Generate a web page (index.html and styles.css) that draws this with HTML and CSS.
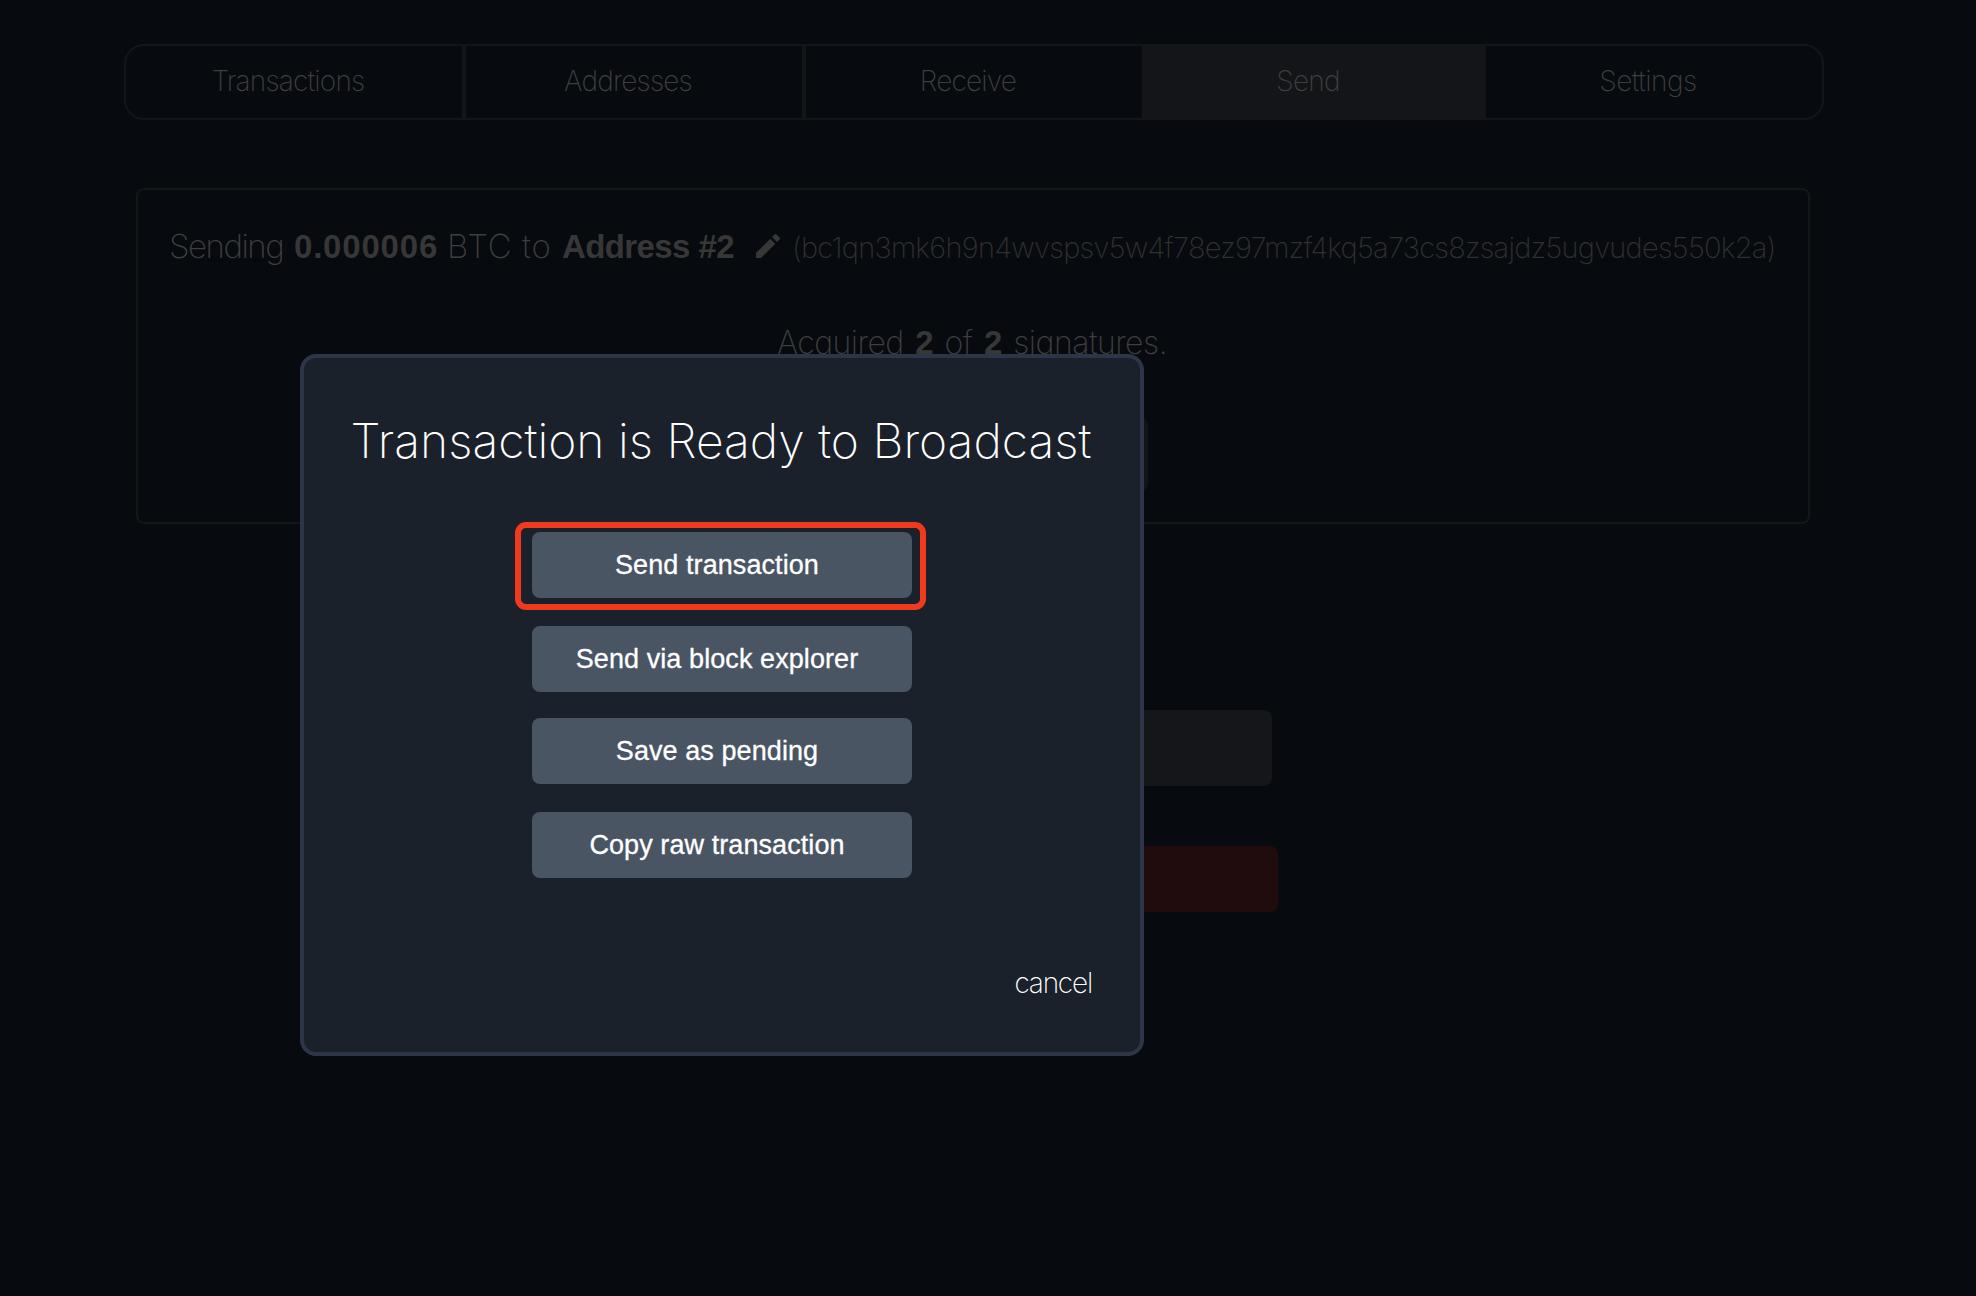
FILE: index.html
```html
<!DOCTYPE html>
<html lang="en">
<head>
<meta charset="utf-8">
<title>Send</title>
<link rel="stylesheet" href="styles.css">
</head>
<body>
<main class="page">
  <nav class="tabs">
    <a class="tab">Transactions</a>
    <a class="tab">Addresses</a>
    <a class="tab">Receive</a>
    <a class="tab active">Send</a>
    <a class="tab">Settings</a>
  </nav>
  <section class="card">
    <p class="summary"><span class="sending">Sending</span><b class="amount">0.000006</b><span class="unit">BTC</span><span class="to">to</span><b class="label">Address #2</b><svg class="pencil" viewBox="0 0 24 24"><path d="M0 19v5h5L19.300 9.700l-5-5zM23.600 5.400a1.300 1.300 0 0 0 0-1.900L20.500.4a1.300 1.300 0 0 0-1.900 0L16 3l5 5z"/></svg><span class="address">(bc1qn3mk6h9n4wvspsv5w4f78ez97mzf4kq5a73cs8zsajdz5ugvudes550k2a)</span></p>
    <p class="signatures">Acquired <b>2</b> of <b>2</b> signatures.</p>
    <div class="small-button"></div>
  </section>
  <div class="wide-button"></div>
  <div class="danger-button"></div>
</main>
<div class="modal">
  <h1>Transaction is Ready to Broadcast</h1>
  <div class="actions">
    <button class="highlighted">Send transaction</button>
    <button>Send via block explorer</button>
    <button>Save as pending</button>
    <button>Copy raw transaction</button>
  </div>
  <a class="cancel">cancel</a>
</div>
</body>
</html>
```
FILE: styles.css
```css
*, *::after { box-sizing: border-box; }
body {
  margin: 0;
  height: 1296px;
  overflow: hidden;
  position: relative;
  background: #070a0f;
  color: #3e3e3e;
  font-family: Inter, "Liberation Sans", sans-serif;
  font-weight: 200;
}
.page {
  width: 1700px;
  margin-left: 124px;
  padding-top: 44px;
  display: flex;
  flex-direction: column;
  align-items: center;
}
.tabs { display: flex; width: 1700px; height: 76px; }
.tab {
  flex: 1;
  padding-right: 12px;
  border: 2px solid #141518;
  font-size: 28px;
  line-height: 70px;
  letter-spacing: -0.8px;
  text-align: center;
}
.tab:first-child { border-radius: 20px 0 0 20px; }
.tab:last-child { border-radius: 0 20px 20px 0; letter-spacing: -0.5px; }
.tab.active { background: #141518; }
.card {
  width: 1674px;
  height: 336px;
  margin: 68px 2px 0 0;
  border: 2px solid #151618;
  border-radius: 8px;
  padding: 34px 31px 0;
  display: flex;
  flex-direction: column;
  align-items: center;
}
.summary {
  margin: 0;
  width: 100%;
  display: flex;
  align-items: baseline;
  font-size: 33px;
  line-height: 44px;
  white-space: nowrap;
}
b { font-weight: 700; font-family: "Liberation Sans", sans-serif; color: #373737; }
.sending { width: 125px; letter-spacing: -1.5px; }
.amount { width: 153px; letter-spacing: 0.8px; }
.unit { width: 75px; letter-spacing: 0.9px; }
.to { width: 40px; letter-spacing: 0.8px; }
.label { width: 194px; letter-spacing: -0.6px; }
.pencil { flex: none; width: 24px; height: 24px; fill: #373737; }
.address { margin-left: 12px; font-size: 29px; letter-spacing: -0.74px; color: #303030; }
.signatures { margin: 51px 2px 0 0; font-size: 32px; line-height: 44px; letter-spacing: -0.52px; word-spacing: 3px; }
.signatures b { font-size: 33px; }
.small-button { width: 350px; height: 74px; margin-top: 52px; border-radius: 8px; background: #121417; }
.wide-button { width: 600px; height: 76px; margin: 186px 4px 0 0; border-radius: 8px; background: #151619; }
.danger-button { width: 610px; height: 66px; margin: 60px 2px 0 0; border-radius: 8px; background: #200b0d; }
.modal {
  position: absolute;
  left: 300px;
  top: 354px;
  width: 844px;
  height: 702px;
  border: 4px solid #2c3646;
  border-radius: 16px;
  background: #1a212a;
  color: #fff;
  display: flex;
  flex-direction: column;
  align-items: center;
}
h1 { margin: 53px 2px 0 0; font-size: 48px; line-height: 60px; font-weight: 200; white-space: nowrap; }
.actions { display: flex; flex-direction: column; margin-top: 61px; }
button {
  width: 380px;
  height: 66px;
  margin: 0 0 28px;
  padding: 0 10px 0 0;
  border: 0;
  border-radius: 8px;
  background: #4a5564;
  color: #fff;
  font: 27px/66px "Liberation Sans", sans-serif;
  letter-spacing: 0.08px;
  -webkit-text-stroke: 0.3px #fff;
}
button:nth-child(2) { margin-bottom: 26px; }
.highlighted { position: relative; }
.highlighted::after {
  content: "";
  position: absolute;
  left: -17px;
  top: -10px;
  width: 411px;
  height: 88px;
  border: 6px solid #f03a1d;
  border-radius: 11px;
}
.cancel { align-self: flex-end; margin: 57px 48px 0 0; font-size: 28px; line-height: 40px; letter-spacing: -1.2px; }
```
